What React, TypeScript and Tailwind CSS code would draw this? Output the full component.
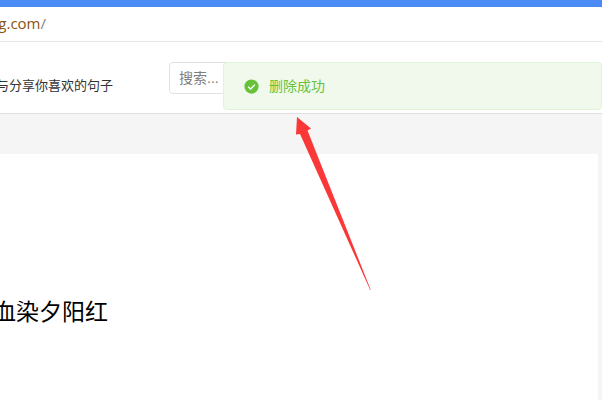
function AddressBar() {
  return (
    <div className="h-[42px] overflow-hidden border-t-[7px] border-b border-t-[#4a8bf5] border-b-[#e3e5e6] bg-white">
      <p className="flex h-8 w-[46px] justify-end font-['Open_Sans',sans-serif] text-[15px] leading-8 whitespace-nowrap text-[#8a5212]">
        g.com<span className="text-[#80868b]">/</span>
      </p>
    </div>
  );
}

function SiteHeader() {
  return (
    <header className="flex h-[72px] items-start overflow-hidden border-b border-[#dedfe0] bg-white pt-5">
      <p className="flex h-12 w-[113px] shrink-0 items-center justify-end text-[13px] whitespace-nowrap text-[#333]">
        与分享你喜欢的句子
      </p>
      <input
        type="text"
        aria-label="搜索"
        placeholder="搜索..."
        className="ml-14 h-8 min-w-0 flex-1 rounded-sm border border-[#e0e2e6] bg-white px-[9px] text-sm text-[#333] outline-none placeholder:text-[#7d7d7d]"
      />
    </header>
  );
}

function SuccessMessage() {
  return (
    <div
      role="alert"
      className="absolute top-[62px] right-0 flex h-12 w-[379px] items-center gap-2.5 rounded border border-[#e1f3d8] bg-[#f0f9eb] pl-5 text-sm text-[#67c23a]"
    >
      <svg className="h-[15px] w-[15px]" viewBox="0 0 16 16" fill="none" aria-hidden="true">
        <circle cx="8" cy="8" r="7.6" fill="#67c23a" />
        <path d="M4.5 8.2l2.5 2.5 4.6-4.7" stroke="#fff" strokeWidth="1.5" />
      </svg>
      <p>删除成功</p>
    </div>
  );
}

function Arrow() {
  return (
    <svg
      className="pointer-events-none absolute top-[116px] left-[294px] h-[176px] w-[80px]"
      viewBox="0 0 80 176"
      aria-hidden="true"
    >
      <path d="M3 1L17 12.5L13.5 14.5L76.8 174L76.2 174L6 18L2 18.5Z" fill="#fa3838" />
    </svg>
  );
}

export default function App() {
  return (
    <div className="relative flex min-h-screen flex-col overflow-hidden bg-[#f5f5f5] font-['Liberation_Sans','Noto_Sans_CJK_SC',sans-serif]">
      <AddressBar />
      <SiteHeader />
      <main className="flex flex-1 flex-col pt-10 pr-1">
        <article className="flex-1 rounded-tr-xs bg-white pt-[140px]">
          <h1 className="flex w-[108px] justify-end text-[23px] leading-9 whitespace-nowrap text-black">
            血染夕阳红
          </h1>
        </article>
      </main>
      <SuccessMessage />
      <Arrow />
    </div>
  );
}
